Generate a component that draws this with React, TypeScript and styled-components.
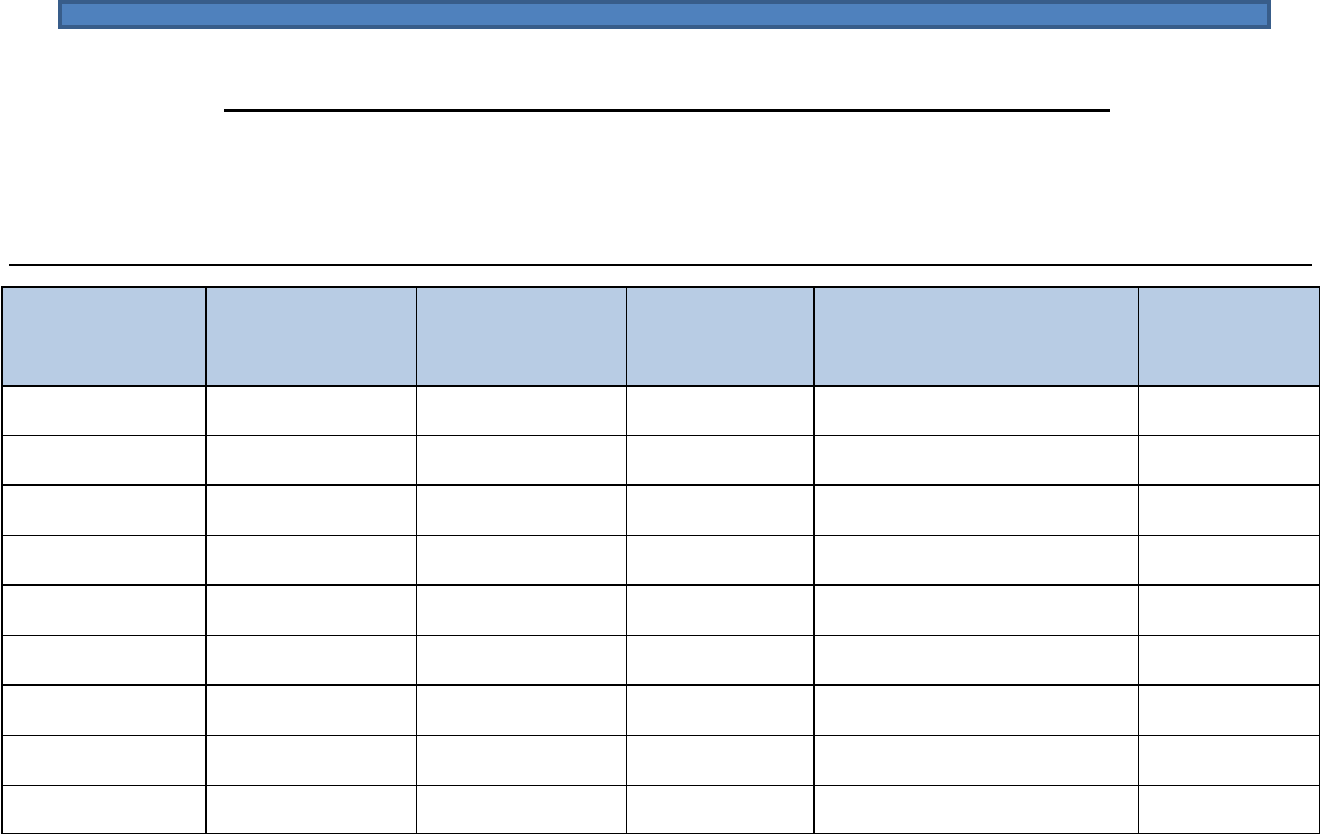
import React from 'react';
import styled, { createGlobalStyle } from 'styled-components';

const GlobalStyle = createGlobalStyle`
  html, body {
    margin: 0;
    padding: 0;
    background: #ffffff;
    font-family: "Liberation Sans", Arial, sans-serif;
  }
`;

const Page = styled.div`
  width: 1320px;
  height: 834px;
  overflow: hidden;
  display: flex;
  flex-direction: column;
`;

const Banner = styled.div`
  box-sizing: border-box;
  margin-left: 58px;
  width: 1213px;
  height: 29px;
  background-color: #4f81bd;
  border: 4px solid #385d8a;
`;

const TitleRule = styled.div<{ $left: number; $width: number; $top: number }>`
  margin-top: ${(p) => p.$top}px;
  margin-left: ${(p) => p.$left}px;
  width: ${(p) => p.$width}px;
  height: 3px;
  background-color: #000;
`;

const Grid = styled.table`
  margin-top: 20px;
  margin-left: 1px;
  width: 1318px;
  table-layout: fixed;
  border-collapse: collapse;

  td,
  th {
    padding: 0;
    border: 1px solid #000;
  }

  td:nth-child(1),
  th:nth-child(1) {
    border-left-width: 2px;
    border-right-width: 2px;
  }

  td:nth-child(4),
  th:nth-child(4),
  td:nth-child(6),
  th:nth-child(6) {
    border-right-width: 2px;
  }
`;

const HeadRow = styled.tr`
  height: 99px;

  th {
    background-color: #b8cce4;
    border-top-width: 2px;
    border-bottom-width: 2px;
  }
`;

const BodyRow = styled.tr<{ $thick?: boolean; $h: number }>`
  height: ${(p) => p.$h}px;

  td {
    border-bottom-width: ${(p) => (p.$thick ? 2 : 1)}px;
  }
`;

const columns = [204, 210, 210, 188, 324, 182];
const rows = [
  { h: 49, thick: false },
  { h: 50, thick: true },
  { h: 50, thick: false },
  { h: 50, thick: true },
  { h: 50, thick: false },
  { h: 50, thick: true },
  { h: 50, thick: false },
  { h: 50, thick: false },
  { h: 48, thick: false },
];

export default function App() {
  return (
    <>
      <GlobalStyle />
      <Page>
        <Banner />
        <TitleRule $top={80} $left={224} $width={886} />
        <TitleRule $top={152} $left={9} $width={1303} />
        <Grid>
          <colgroup>
            {columns.map((w, i) => (
              <col key={i} style={{ width: w }} />
            ))}
          </colgroup>
          <thead>
            <HeadRow>
              {columns.map((_, i) => (
                <th key={i} />
              ))}
            </HeadRow>
          </thead>
          <tbody>
            {rows.map((r, ri) => (
              <BodyRow key={ri} $h={r.h} $thick={r.thick}>
                {columns.map((_, ci) => (
                  <td key={ci} />
                ))}
              </BodyRow>
            ))}
          </tbody>
        </Grid>
      </Page>
    </>
  );
}
